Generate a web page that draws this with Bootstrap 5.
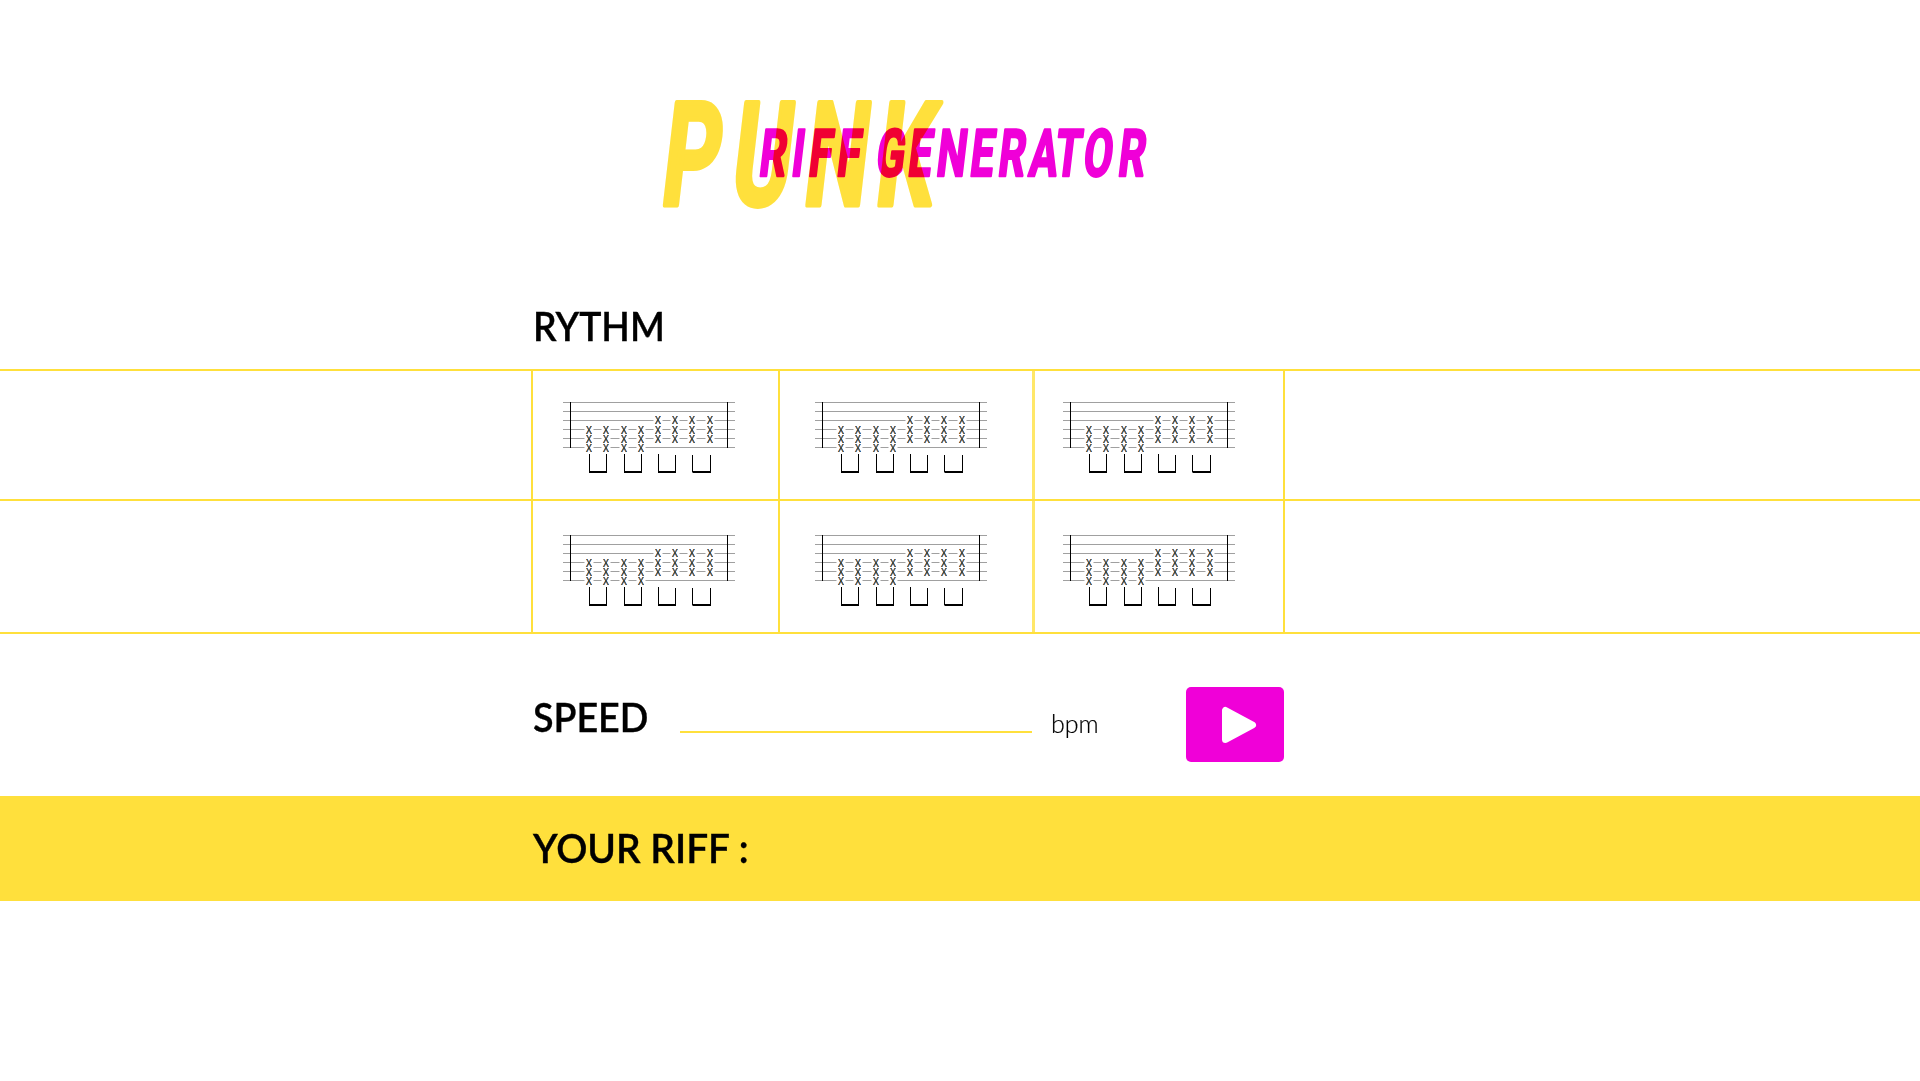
<!DOCTYPE html>
<html lang="en">
<head>
<meta charset="utf-8">
<meta name="viewport" content="width=device-width, initial-scale=1">
<title>Punk Riff Generator</title>
<link href="https://cdn.jsdelivr.net/npm/bootstrap@5.3.0/dist/css/bootstrap.min.css" rel="stylesheet">
<style>
:root{--sun:#ffe03c;--pink:#f000d8}
body{background:#fff;color:#000;font-family:Lato,sans-serif;overflow:hidden}
.wrap{width:754px;margin-left:531px}
.hero{height:289px;padding:90px 0 0 119px}
.hero svg{display:block;overflow:visible;font-family:Roboto,sans-serif;font-weight:700}
.over{mix-blend-mode:multiply}
.title{font-size:39.5px;font-weight:600;line-height:48px;margin:0;white-space:nowrap;-webkit-text-stroke:.35px #000;transform-origin:0 50%}
.t-rythm{transform:scaleX(.942)}
.t-speed{transform:scaleX(.953)}
.t-riff{transform:scaleX(.982)}
.rythm{height:80px;padding:13px 0 0 1.5px}
.band{border-top:2px solid var(--sun)}
.band-a{height:130px}
.band-b{height:135px;border-bottom:2px solid var(--sun)}
.cell{border-left:2px solid var(--sun);height:100%;padding-left:30px}
.c1{width:247px}
.c2{width:254px;padding-left:35px}
.c3{width:253px;padding-left:28px;border-left:3px solid #ffe768;border-right:2px solid var(--sun)}
.band-a .cell{padding-top:31px}
.band-b .cell{padding-top:34px}
.tab{display:block;overflow:visible}
.speed{height:162px;padding-top:53px}
.speed .title{width:149px;padding:6px 0 0 2px}
.field{width:352px;height:46px;border:0;border-bottom:2px solid var(--sun);border-radius:0;padding:0;background:none}
.unit{font-size:25px;font-weight:300;line-height:30px;width:154px;padding:21px 0 0 19px;-webkit-text-stroke:.2px #000}
.play{width:98px;height:75px;background:var(--pink);border:0;border-radius:5px;padding:0}
.riff{background:var(--sun);height:105px;padding:28px 0 0 2px}
</style>
</head>
<body>
<svg width="0" height="0" class="position-absolute" aria-hidden="true">
<defs>
<g id="tab">
<path d="M0 .5H172M0 9.500H172M0 18.500H172M0 27.500H172M0 36.500H172M0 45.500H172" stroke="#a0a0a0"/>
<path d="M26 23V50M43 23V50M61 23V50M78 23V50M95 14V41M112 14V41M129 14V41M147 14V41" stroke="#fff" stroke-width="9"/>
<path d="M7.500 0V46M164.500 0V46" stroke="#000"/>
<g font-family="Liberation Sans,sans-serif" font-size="11.500" id="notes"></g>
<path d="M26.500 52V70M43.500 52V70M61.500 52V70M78.500 52V70M95.500 52V70M112.500 53V70M129.500 53V70M147.500 53V70" stroke="#000"/>
<path d="M26 70H44M61 70H79M95 70H113M129.500 70H148" stroke="#000" stroke-width="2"/>
</g>
</defs>
</svg>

<header class="hero">
<div class="wrap">
<svg width="500" height="120" viewBox="650 90 500 120" role="img" aria-label="Punk Riff Generator">
<g fill="#ffe03c" stroke="#ffe03c" stroke-width="5" stroke-linejoin="round" font-size="144">
<g transform="translate(662.500 205) skewX(-6.600) scale(.62 1)"><text x="-6 107 224 340">PUNK</text></g>
</g>
<g class="over" fill="#f000d8" stroke="#f000d8" stroke-width="2.600" stroke-linejoin="round" font-size="65.500">
<g transform="translate(759.300 176) skewX(-6.800) scale(.64 1)"><text x="-2.500 48 75 119 160 180 230 274.500 327 371 419.500 459 504 558.500">RIFF GENERATOR</text></g>
</g>
</svg>
</div>
</header>

<main>
<div class="wrap rythm"><h2 class="title t-rythm">RYTHM</h2></div>
<section class="band band-a"><div class="wrap d-flex h-100" data-row></div></section>
<section class="band band-b"><div class="wrap d-flex h-100" data-row></div></section>
<section class="speed"><div class="wrap d-flex align-items-start">
<h2 class="title t-speed flex-shrink-0">SPEED</h2>
<input class="field flex-shrink-0" aria-label="Speed">
<span class="unit flex-shrink-0">bpm</span>
<button class="play btn flex-shrink-0" aria-label="Play"><svg class="d-block" width="98" height="75"><path d="M39.500 23.500V52.500L66.500 38Z" fill="#fff" stroke="#fff" stroke-width="7" stroke-linejoin="round"/></svg></button>
</div></section>
<section class="riff"><div class="wrap"><h2 class="title t-riff">YOUR RIFF :</h2></div></section>
</main>
<script src="https://cdn.jsdelivr.net/npm/bootstrap@5.3.0/dist/js/bootstrap.bundle.min.js"></script>
<script>
const cols = [26, 43, 61, 78, 95, 112, 129, 147];
// each muted-string mark is an X with a warm left edge and a cool right edge
const inks = [[-.4, '#a8560c'], [.4, '#0c56a8']];
let notes = '';
cols.forEach((x, i) => (i < 4 ? [32, 41, 50] : [22, 32, 41]).forEach(y => {
  inks.forEach(([dx, ink]) => {
    notes += `<text class="over" fill="${ink}" transform="translate(${x + dx} ${y}) scale(.8 1)" text-anchor="middle">X</text>`;
  });
}));
document.getElementById('notes').innerHTML = notes;
document.querySelectorAll('[data-row]').forEach(row => {
  row.innerHTML = [1, 2, 3].map(n => `<div class="cell c${n}"><svg class="tab" width="172" height="72"><use href="#tab"/></svg></div>`).join('');
});
</script>
</body>
</html>
